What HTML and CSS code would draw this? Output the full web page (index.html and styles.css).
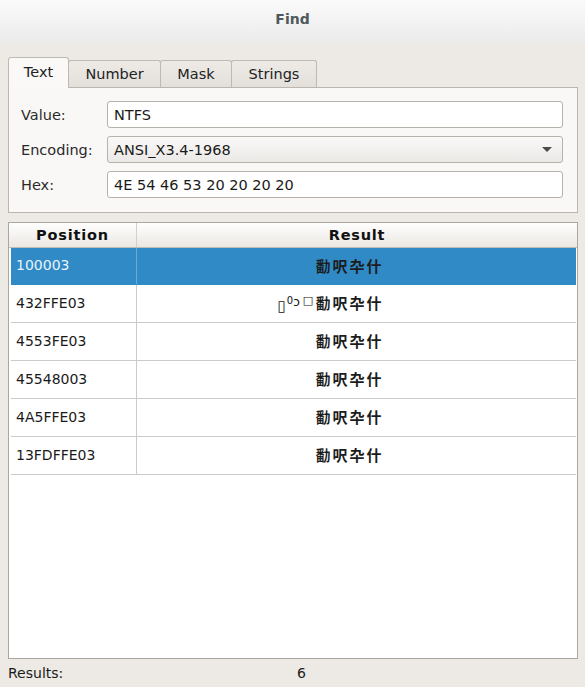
FILE: index.html
```html
<!DOCTYPE html>
<html>
<head>
<meta charset="utf-8">
<link rel="stylesheet" href="styles.css">
</head>
<body>
<div class="titlebar">Find</div>
<div class="content">
  <div class="tabs">
    <div class="tab active">Text</div>
    <div class="tab tab-number">Number</div>
    <div class="tab tab-mask">Mask</div>
    <div class="tab tab-strings">Strings</div>
  </div>
  <div class="panel">
    <div class="form">
      <label class="lbl">Value:</label>
      <div class="field">NTFS</div>
      <label class="lbl">Encoding:</label>
      <div class="field combo"><span>ANSI_X3.4-1968</span><span class="arrow"></span></div>
      <label class="lbl">Hex:</label>
      <div class="field">4E 54 46 53 20 20 20 20</div>
    </div>
  </div>
  <div class="table">
    <div class="thead">
      <div class="th col-pos">Position</div>
      <div class="th col-res">Result</div>
    </div>
    <div class="tbody">
      <div class="row selected"><div class="td col-pos">100003</div><div class="td col-res"><span class="cjk">勫呎卆什</span></div></div>
      <div class="row"><div class="td col-pos">432FFE03</div><div class="td col-res"><span class="pre"><span class="box">▯</span><span class="sup">0</span><span class="odd">ↄ</span><span class="sq">□</span></span><span class="cjk">勫呎卆什</span></div></div>
      <div class="row"><div class="td col-pos">4553FE03</div><div class="td col-res"><span class="cjk">勫呎卆什</span></div></div>
      <div class="row"><div class="td col-pos">45548003</div><div class="td col-res"><span class="cjk">勫呎卆什</span></div></div>
      <div class="row"><div class="td col-pos">4A5FFE03</div><div class="td col-res"><span class="cjk">勫呎卆什</span></div></div>
      <div class="row"><div class="td col-pos">13FDFFE03</div><div class="td col-res"><span class="cjk">勫呎卆什</span></div></div>
    </div>
  </div>
  <div class="status">
    <span class="status-label">Results:</span>
    <span class="status-value">6</span>
  </div>
</div>
</body>
</html>
```
FILE: styles.css
```css
* { box-sizing: border-box; }
html, body {
  margin: 0;
  padding: 0;
  width: 585px;
  height: 687px;
  overflow: hidden;
  background: #edeae5;
  font-family: "DejaVu Sans", "Noto Sans CJK SC", sans-serif;
  font-size: 14.5px;
  color: #1a1a1a;
}
.titlebar {
  height: 44px;
  background: linear-gradient(#fafafa, #ebebeb);
  display: flex;
  align-items: center;
  justify-content: center;
  font-weight: bold;
  font-size: 14px;
  color: #4f585c;
  padding-bottom: 6px;
}
.content {
  padding: 0 8px 0 8px;
  display: flex;
  flex-direction: column;
}
.tabs {
  display: flex;
  align-items: flex-end;
  margin-top: 13px;
  height: 30px;
  position: relative;
  z-index: 1;
}
.tab {
  height: 27px;
  border: 1px solid #bdb9b3;
  border-bottom: none;
  border-radius: 3px 3px 0 0;
  background: linear-gradient(#eeebe7, #e3e0dc);
  display: flex;
  align-items: center;
  justify-content: center;
  color: #222;
  margin-left: -1px;
}
.tab.active {
  height: 31px;
  margin-left: 0;
  margin-bottom: -1px;
  background: #fbf9f7;
  width: 61px;
  padding-bottom: 3px;
}
.tab-number { width: 93px; }
.tab-mask { width: 72px; }
.tab-strings { width: 86px; }
.panel {
  width: 570px;
  height: 126px;
  background: #faf8f6;
  border: 1px solid #b9b5af;
  padding: 13px 14px 0 12px;
}
.form {
  display: grid;
  grid-template-columns: 86px 1fr;
  grid-auto-rows: 27px;
  row-gap: 8px;
  align-items: center;
}
.form .lbl { color: #2a2a2a; }
.field {
  height: 27px;
  border: 1px solid #b6b2ac;
  border-radius: 3px;
  background: #ffffff;
  display: flex;
  align-items: center;
  padding-left: 6px;
  color: #1a1a1a;
}
.combo {
  background: linear-gradient(#faf9f8, #ebe9e6);
  justify-content: space-between;
  padding-right: 10px;
}
.arrow {
  width: 0;
  height: 0;
  border-left: 5px solid transparent;
  border-right: 5px solid transparent;
  border-top: 5px solid #4a4a4a;
}
.table {
  margin-top: 9px;
  width: 570px;
  height: 437px;
  border: 1px solid #aaa6a0;
  background: #ffffff;
  display: flex;
  flex-direction: column;
}
.thead {
  display: flex;
  height: 25px;
  background: linear-gradient(#fefefe, #ebe8e3);
  border-bottom: 1px solid #bfbbb5;
}
.th {
  display: flex;
  align-items: center;
  justify-content: center;
  font-weight: bold;
  font-size: 14.5px;
  letter-spacing: 0.8px;
  color: #111;
}
.thead .col-pos { width: 128px; border-right: 1px solid #d3cfca; }
.thead .col-res { flex: 1; }
.tbody {
  padding: 0 1px 0 2px;
  display: flex;
  flex-direction: column;
}
.row {
  display: flex;
  height: 38px;
  border-bottom: 1px solid #cbcbcb;
}
.row:first-child { height: 37px; }
.row .col-pos {
  width: 126px;
  border-right: 1px solid #cbcbcb;
  padding-left: 5px;
  padding-bottom: 2px;
  display: flex;
  align-items: center;
  font-size: 14px;
  color: #1a1a1a;
}
.row .col-res {
  flex: 1;
  display: flex;
  align-items: center;
  justify-content: center;
  padding-right: 14px;
  padding-bottom: 2px;
  color: #111;
}
.row.selected { background: #2f8ac6; border-bottom-color: #2f8ac6; }
.row.selected .col-pos { color: #eaf3fa; border-right-color: #6aaad6; }
.cjk {
  font-family: "Noto Sans CJK SC", sans-serif;
  font-size: 15px;
  font-weight: bold;
  letter-spacing: 2px;
  color: #1c1c1c;
}
.pre {
  flex: none;
  display: flex;
  align-items: center;
  width: 38px;
  margin-left: -38px;
  overflow: hidden;
}
.box { font-size: 15px; margin-top: 6px; }
.sup { font-size: 10px; margin-top: -4px; margin-left: 1px; }
.odd { font-size: 12px; margin-top: -2px; }
.sq { font-size: 11px; margin: -4px 0 0 3px; }
.status {
  display: flex;
  align-items: center;
  height: 28px;
  font-size: 14px;
  color: #1a1a1a;
}
.status-label { width: 289px; }
```
